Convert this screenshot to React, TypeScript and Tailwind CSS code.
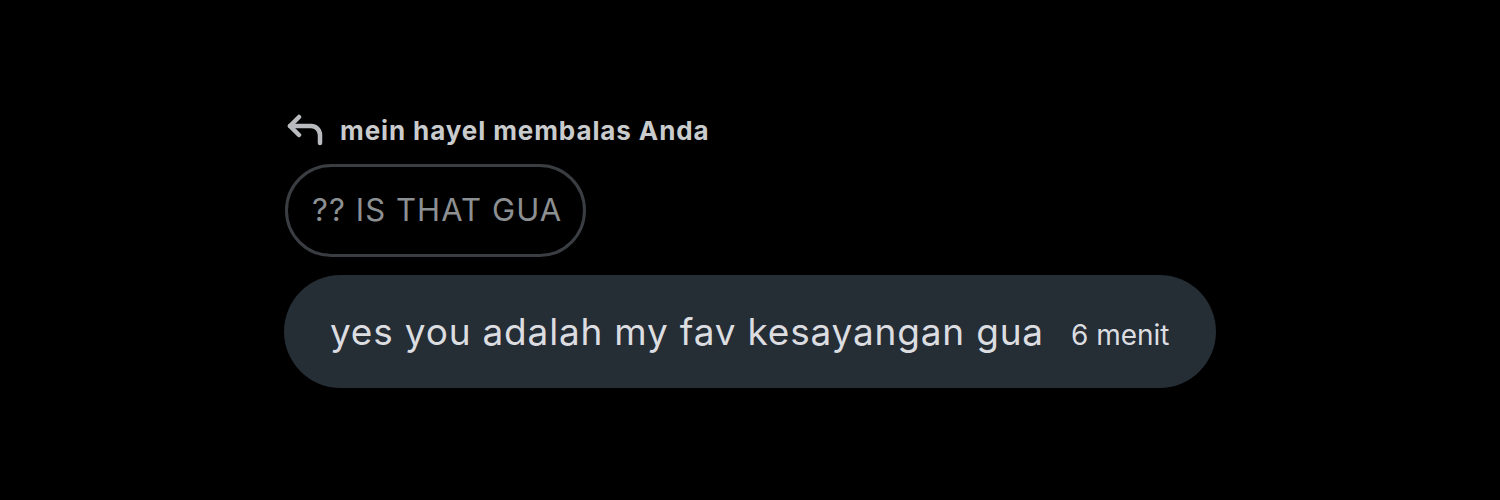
export default function App() {
    return (
        <div className="w-[1500px] h-[500px] bg-black flex flex-col items-start pl-[284px] pt-[112px]" style={{ fontFamily: 'Inter, "Open Sans", sans-serif' }}>
            <div className="flex items-center gap-[15px] pl-[3px] h-[36px]">
                <svg width="38" height="34" viewBox="0 0 38 34" fill="none" stroke="#b9bbbe" strokeWidth="4.5" strokeLinecap="round" strokeLinejoin="round">
                    <polyline points="12,4 3,13 12,22" />
                    <path d="M3 13h21a9 9 0 0 1 9 9v8" />
                </svg>
                <span className="text-[26px] font-bold text-[#c9cbcd] tracking-[0.9px]">mein hayel membalas Anda</span>
            </div>
            <div className="mt-[16px] h-[93px] rounded-full border-[3px] border-[#3a3e42] flex items-center pl-[24px] pr-[21px] ml-[1px]">
                <span className="text-[31px] text-[#8d9093] tracking-[1.1px]">?? IS THAT GUA</span>
            </div>
            <div className="mt-[18px] w-[932px] h-[113px] rounded-full bg-[#252d35] flex items-center pl-[46px]">
                <span className="text-[37px] text-[#dcdde0] tracking-[0.8px]">yes you adalah my fav kesayangan gua</span>
                <span className="ml-[27px] mt-[6px] text-[28px] text-[#dcdde0]">6 menit</span>
            </div>
        </div>
    )
}
